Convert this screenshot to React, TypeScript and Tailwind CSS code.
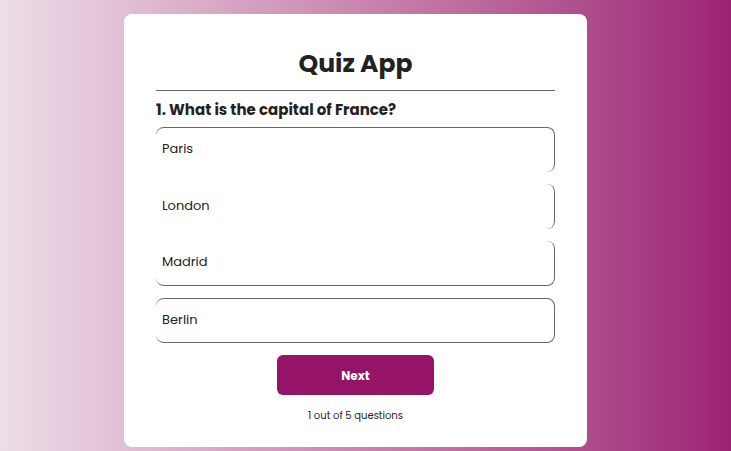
const options = [
  { label: "Paris", border: "border-t border-r" },
  { label: "London", border: "border-r" },
  { label: "Madrid", border: "border-r border-b" },
  { label: "Berlin", border: "border-t border-r border-b" },
];

export default function App() {
  return (
    <div
      className="flex h-[451px] w-full justify-center bg-gradient-to-r from-[#ecdee8] to-[#9b2175] pr-5 pt-[14px]"
      style={{ fontFamily: "Poppins, Inter, 'Liberation Sans', sans-serif" }}
    >
      <div className="h-[433px] w-[463px] rounded-lg bg-white px-8 pt-[33px]">
        <h1 className="text-center text-[25px] font-bold leading-[34px] text-[#222]">
          Quiz App
        </h1>
        <div className="mt-[9px] h-px bg-[#666]" />
        <h2 className="mt-[9px] text-[15px] font-bold leading-5 text-[#222]">
          1. What is the capital of France?
        </h2>
        <div className="mt-[7px] flex flex-col gap-3">
          {options.map((o) => (
            <button
              key={o.label}
              className={`h-[45px] w-full rounded-lg border-[#666] px-[6px] pb-[2px] text-left text-[13px] text-[#222] ${o.border}`}
            >
              {o.label}
            </button>
          ))}
        </div>
        <div className="mt-3 flex justify-center">
          <button className="h-10 w-[157px] rounded-md bg-[#951467] pt-[2px] text-[12px] font-bold text-white">
            Next
          </button>
        </div>
        <p className="mt-[13px] text-center text-[10px] text-[#222]">
          1 out of 5 questions
        </p>
      </div>
    </div>
  );
}
